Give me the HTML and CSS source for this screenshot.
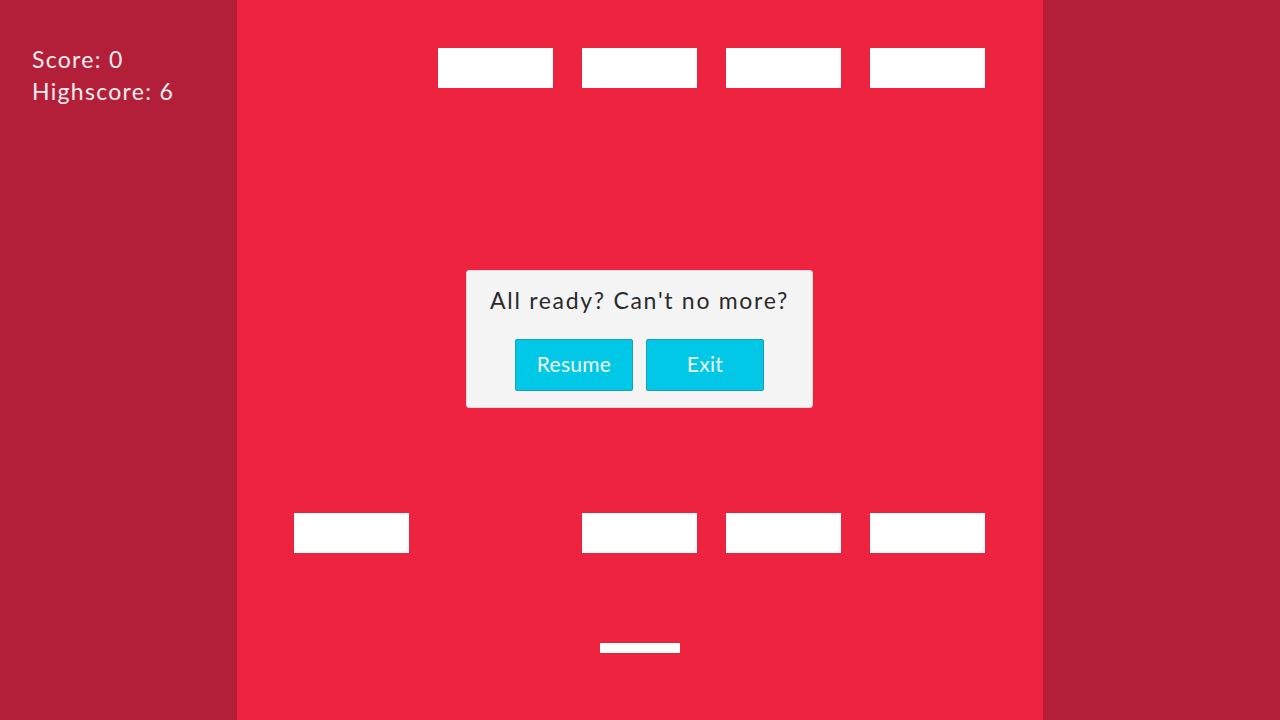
FILE: index.html
```html
<!DOCTYPE html>
<html>
<head>
<meta charset="utf-8">
<link rel="stylesheet" href="styles.css">
</head>
<body>
<div class="screen">
  <aside class="side side-left">
    <div class="stats">
      <div class="stat">Score: 0</div>
      <div class="stat">Highscore: 6</div>
    </div>
  </aside>
  <main class="field">
    <div class="bricks row-top">
      <div class="brick gone"></div>
      <div class="brick"></div>
      <div class="brick"></div>
      <div class="brick"></div>
      <div class="brick"></div>
    </div>
    <div class="bricks row-bottom">
      <div class="brick"></div>
      <div class="brick gone"></div>
      <div class="brick"></div>
      <div class="brick"></div>
      <div class="brick"></div>
    </div>
    <div class="paddle"></div>
    <div class="dialog">
      <p class="dialog-title">All ready? Can't no more?</p>
      <div class="dialog-actions">
        <button class="btn">Resume</button>
        <button class="btn">Exit</button>
      </div>
    </div>
  </main>
  <aside class="side side-right"></aside>
</div>
</body>
</html>
```

FILE: styles.css
```css
html, body {
  margin: 0;
  padding: 0;
  width: 1280px;
  height: 720px;
  overflow: hidden;
  font-family: "Lato", "Noto Sans", sans-serif;
}

.screen {
  display: flex;
  width: 1280px;
  height: 720px;
}

.side {
  width: 237px;
  background: #b31f38;
  flex: none;
}

.stats {
  padding: 43px 0 0 32px;
  color: #fbeef0;
  font-size: 23px;
  line-height: 32px;
  letter-spacing: 1.3px;
}

.field {
  position: relative;
  flex: 1;
  background: #ed2340;
  display: flex;
  flex-direction: column;
  padding: 48px 57px 0 57px;
}

.bricks {
  display: grid;
  grid-template-columns: repeat(5, 115px);
  column-gap: 29px;
  height: 40px;
}

.row-bottom {
  margin-top: 425px;
}

.brick {
  background: #ffffff;
  height: 40px;
}

.brick.gone {
  visibility: hidden;
}

.paddle {
  align-self: center;
  width: 80px;
  height: 10px;
  background: #ffffff;
  margin-top: 90px;
}

.dialog {
  position: absolute;
  top: 270px;
  left: 229px;
  width: 345px;
  height: 136px;
  background: #f4f4f5;
  border: 1px solid #d9d9dc;
  border-radius: 3px;
  display: flex;
  flex-direction: column;
  align-items: center;
  box-sizing: content-box;
}

.dialog-title {
  margin: 15px 0 0 0;
  font-size: 23px;
  line-height: 28px;
  color: #2a2a2a;
  letter-spacing: 1.7px;
}

.dialog-actions {
  display: flex;
  gap: 13px;
  margin-top: 25px;
}

.btn {
  width: 118px;
  height: 52px;
  background: #00c8e6;
  border: 1px solid #1c9fb6;
  border-radius: 2px;
  color: #f2fbfd;
  font-family: "Lato", "Noto Sans", sans-serif;
  font-size: 21px;
  padding: 0 0 3px 0;
  letter-spacing: 0.3px;
}
```
